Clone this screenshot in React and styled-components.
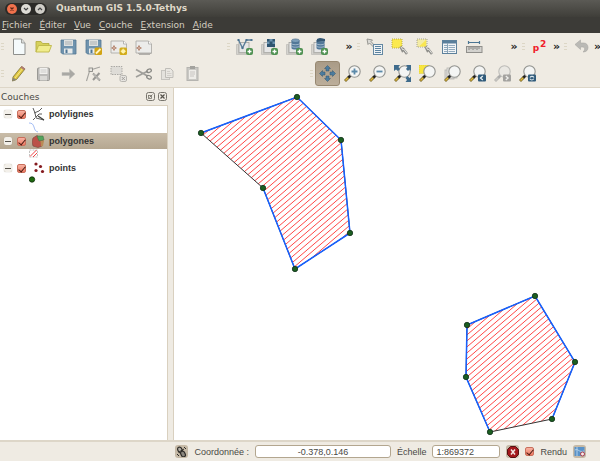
import React, { useState } from 'react'
import styled, { createGlobalStyle } from 'styled-components';

const INK = '#8a8a86';
const BLUE = '#3f6b8c';

const Badge = () => (
  <>
    <rect x="10" y="10" width="7" height="7" rx="2" fill="#4f9152" />
    <path d="M13.5 11.5v4M11.5 13.5h4" stroke="#fff" strokeWidth="1.3" />
  </>
)

const Sheets = () => (
  <>
    <path d="M.5 6.5h2v9h8v1H.5z" fill="#d4d3cf" stroke="#b5b4af" strokeWidth=".6" />
    <rect x="3" y="4.5" width="10" height="10" fill="#e6e6e6" stroke="#a3a3a0" strokeWidth=".8" />
  </>
)

const Lens = ({ faded }) => (
  <>
    <path d="M6.5 10.5L4 13" stroke={faded ? '#aaa' : '#222'} strokeWidth="2.6" />
    <path d="M4.5 12.5L1 16" stroke={faded ? '#b5b4b0' : '#77672a'} strokeWidth="2.8" />
    <path d="M4 13L1.5 15.5" stroke={faded ? '#c9c8c4' : '#e3b93a'} strokeWidth="1.4" />
    <circle cx="10.5" cy="6.5" r="5.7" fill={faded ? '#eae8e3' : '#f4f5f4'} stroke={faded ? '#bdbcb8' : '#92938f'} strokeWidth="1.1" />
  </>
)

const Wrench = () => (
  <>
    <path d="M9.5 8.5l2 4 1-1 3.5 4.5" fill="none" stroke="#8f8f8b" strokeWidth="2.6" />
    <path d="M10 9l2 3 .8-.8L16 15.5" fill="none" stroke="#e5e4e0" strokeWidth="1" />
  </>
)

const Database = () => (
  <>
    <path d="M5.5 3v7c0 2 8 2 8 0V3z" fill="#51789a" />
    <ellipse cx="9.5" cy="2.7" rx="4" ry="1.8" fill="#7b9db8" stroke="#3f6485" strokeWidth=".6" />
    <path d="M5.5 5.5c0 1.6 8 1.6 8 0M5.5 8c0 1.6 8 1.6 8 0" fill="none" stroke="#b4c8d6" strokeWidth=".8" />
  </>
)

const Disk = () => (
  <>
    <path d="M1 2h15v14H2.5L1 14.5z" fill="#6f93ae" stroke="#537792" strokeWidth=".8" />
    <rect x="4" y="2" width="9" height="6" fill="#dfe1e0" />
    <path d="M5 4h7M5 6h7" stroke="#9da5a9" strokeWidth=".8" />
    <rect x="4" y="10.5" width="8.5" height="5" fill="#e9ebea" />
    <rect x="5.5" y="11.5" width="2" height="3.5" fill="#4f7695" />
  </>
)

const MapPage = () => (
  <>
    <path d="M1 3h12.5L16.5 6v9H1z" fill="#ececea" stroke="#a7a6a2" strokeWidth=".8" />
    <path d="M13.5 3v3h3" fill="#fff" stroke="#a7a6a2" strokeWidth=".8" />
    <path d="M4 7.5v5M1.5 10h5" stroke="#a26448" strokeWidth="1.2" />
    <circle cx="4" cy="10" r="1.2" fill="#fff" stroke="#a26448" strokeWidth=".8" />
  </>
)

const ICONS = {
  newFile: <>
    <path d="M3.5 1h8L15 5v11.5H3.5z" fill="#f5fafb" stroke="#8f908d" />
    <path d="M11.5 1v4H15" fill="#dcdedc" stroke="#8f908d" strokeWidth=".8" />
  </>,
  open: <>
    <path d="M1 14V3.5h5l1.5 2H14V8" fill="#d6d05a" stroke="#b5af42" strokeWidth=".9" />
    <path d="M1 14L3.5 7.5h13L14 14z" fill="#f0ec8c" stroke="#bdb748" strokeWidth=".9" />
  </>,
  save: <Disk />,
  saveAs: <>
    <Disk />
    <rect x="9.5" y="9.5" width="7.5" height="7.5" rx="1.5" fill="#d2a414" />
    <path d="M11 15.5l4.5-4.5" stroke="#fff4c5" strokeWidth="1.8" />
  </>,
  newComposer: <>
    <MapPage />
    <rect x="9.5" y="9.5" width="7.5" height="7.5" rx="1.5" fill="#d2ac1c" />
    <circle cx="13.2" cy="13.2" r="2" fill="#fff6bd" />
    <path d="M13.2 10.5v5.4M10.5 13.2h5.4" stroke="#fff2a5" strokeWidth=".8" />
  </>,
  composers: <>
    <path d="M3 15.5h13.5M4 16.5h11" stroke="#aaa9a5" strokeWidth=".9" />
    <MapPage />
  </>,
  addVector: <>
    <Sheets />
    <path d="M2.5 2l4 8 4-8h5" fill="none" stroke="#5a7e99" strokeWidth="1.4" />
    <path d="M1.5 1h2v2h-2zM5.5 9h2v2h-2zM9.5 1h2v2h-2zM14.5 1h2v2h-2z" fill="#4b728f" />
    <Badge />
  </>,
  addRaster: <>
    <Sheets />
    <rect x="6" y="1" width="8" height="8" fill="#2f5570" />
    <path d="M8.5 1h3v2.5h-3zM6 3.5h2.5V6H6zM11.5 3.5H14V6h-2.5z" fill="#6c94b0" />
    <Badge />
  </>,
  addPostgis: <><Sheets /><Database /><Badge /></>,
  addSpatialite: <>
    <Sheets /><Database />
    <path d="M6 1l3-1 5 1v2l-8 1z" fill="#345773" />
    <Badge />
  </>,
  identify: <>
    <path d="M1 1l5.5 1-1.5 1.500L9 8 7.500 9 3.500 5 2 6.500z" fill="#dad9d5" stroke="#8f8e8a" strokeWidth=".9" />
    <rect x="7.5" y="6.5" width="9" height="10" fill="#f0f3f5" stroke="#6488a2" />
    <path d="M9 8.500h6M9 10.500h6M9 12.500h6M9 14.500h6" stroke="#5b83a1" />
  </>,
  select: <>
    <rect x="1" y="1" width="10" height="9" fill="#fbe94e" stroke="#b3a53c" strokeWidth=".9" strokeDasharray="1 1" />
    <Wrench />
  </>,
  deselect: <>
    <rect x="1" y="1" width="10" height="8" fill="#f3eba5" stroke="#9d9b8b" strokeWidth=".9" strokeDasharray="1 1" />
    <path d="M10 2v6.5H3z" fill="#f9e650" />
    <Wrench />
  </>,
  table: <>
    <rect x="1.5" y="2.5" width="14" height="13" fill="#f3f5f6" stroke="#5d819c" />
    <rect x="2" y="3" width="13" height="2.5" fill="#5a7f9b" />
    <path d="M3 7.5h3M3 9.5h3M3 11.5h3M3 13.5h3M7.5 7.5H14M7.5 9.5H14M7.5 11.5H14M7.5 13.5H14" stroke="#91aabd" />
    <path d="M6.500 5.500V15" stroke="#5d819c" strokeWidth=".7" />
  </>,
  measure: <>
    <path d="M2 4.5h12M2.5 3v3M13.5 3v3" stroke="#4c7693" strokeWidth="1.2" />
    <rect x=".5" y="8.5" width="15.5" height="6" fill="#d3d2ce" stroke="#908f8b" />
    <path d="M3 9v3M5 9v2M7 9v3M9 9v2M11 9v3M13 9v2" stroke="#73726f" strokeWidth=".8" />
  </>,
  undo: <path d="M2 6.5L7.5 2v3h3c3 0 4.5 2 4.5 4.5S13.5 14 10 14c2-1.5 2.5-5-.5-5h-2v2.5z" fill="#bab9b5" stroke="#a9a8a4" strokeWidth=".6" />,
  pencil: <>
    <path d="M3 12L11.5 1.5 15 4 6.5 14.5 2.5 16z" fill="#e0c640" stroke="#857a3d" strokeWidth=".9" />
    <path d="M5 13L13 3" stroke="#f5e98b" strokeWidth="1" />
    <path d="M10.5 2.5L11.8 1l3.5 2.7L14 5.3z" fill="#ae7a76" />
    <path d="M2.3 16.3L3 12.5l3.5 2.2z" fill="#8b867b" />
  </>,
  diskGrey: <>
    <rect x="2.5" y="3" width="12" height="12.5" rx="1" fill="#bcbbb9" stroke="#93928f" strokeWidth=".9" />
    <rect x="4.5" y="3" width="8" height="6" fill="#f1f0ee" />
    <path d="M5.5 5h6M5.5 7h6" stroke="#c3c2bf" strokeWidth=".8" />
    <rect x="5" y="11" width="7" height="4.5" fill="#dad9d6" />
  </>,
  arrow: <path d="M2 7.5h7.5V4L15 9l-5.500 5v-3.500H2z" fill="#a9a8a4" stroke="#bdbcb8" strokeWidth=".5" />,
  node: <>
    <path d="M1.5 16L5 4.5h2L15 2" fill="none" stroke="#a3a29e" strokeWidth="1.1" />
    <rect x="4" y="3" width="3.5" height="3.5" fill="#e7e5e0" stroke="#8b8a86" strokeWidth=".9" />
    <path d="M8 8.5l7 7M14.5 8L8 15" stroke="#999894" strokeWidth="2" />
    <path d="M8.5 9l6 6" stroke="#dad9d5" strokeWidth=".8" />
  </>,
  removeSel: <>
    <rect x="1" y="1.5" width="11" height="8" fill="#dedcd7" stroke="#aba9a4" strokeDasharray="1.5 1" />
    <rect x="10" y="10.5" width="6.5" height="6" rx="1.5" fill="#e7e5e1" stroke="#b8b6b1" />
    <path d="M11.800 12l3 3M14.800 12l-3 3" stroke="#a3a19d" />
  </>,
  cut: <>
    <path d="M1 4.5l11.500 6.500M1 12L13 6" stroke="#a09f9b" strokeWidth="1.8" />
    <ellipse cx="14" cy="12.2" rx="2.4" ry="1.6" transform="rotate(25 14 12.2)" fill="none" stroke={INK} strokeWidth="1.3" />
    <ellipse cx="14" cy="5.8" rx="2.4" ry="1.6" transform="rotate(-25 14 5.8)" fill="none" stroke={INK} strokeWidth="1.3" />
  </>,
  copy: <>
    <rect x="1.5" y="5.5" width="8" height="9" fill="#e4e2dd" stroke="#c6c4bf" />
    <path d="M5.5 3.5h5L13 6v6.5H5.5z" fill="#e9e7e2" stroke="#bfbdb8" />
    <path d="M7 6.5h3M7 8.5h4.5M7 10.5h4.5" stroke="#cbc9c4" strokeWidth=".8" />
  </>,
  paste: <>
    <rect x="2" y="2.5" width="11" height="13" fill="#c9c8c4" stroke="#b5b4b0" />
    <rect x="4" y="5" width="7" height="9" fill="#eeece8" />
    <rect x="5" y="1" width="5" height="3" fill="#a3a29e" />
    <path d="M5 7h5M5 9h5M5 11h4" stroke="#bdbbb7" strokeWidth=".8" />
  </>,
  pan: <g fill="#4c7c9e" stroke="#31556f" strokeWidth=".5">
    <path d="M8.5.5l3 3H10V6H7V3.500H5.500z" />
    <path d="M8.5 16.5l3-3H10V11H7v2.500H5.500z" />
    <path d="M.5 8.5l3-3V7H6v3H3.500v1.500z" />
    <path d="M16.5 8.5l-3-3V7H11v3h2.500v1.500z" />
  </g>,
  zoomIn: <><Lens /><path d="M10.5 3.500v6M7.500 6.500h6" stroke="#5b89a9" strokeWidth="1.8" /></>,
  zoomOut: <><Lens /><path d="M7.5 6.5h6" stroke="#5b89a9" strokeWidth="1.8" /></>,
  zoomFull: <>
    <Lens />
    <path d="M0 0h6L4.5 2 6 4 4 6 2 4.500 0 6zM17 0h-5l1.500 2L12 4l2 2 1.500-1.500L17 6zM17 17h-5.500l1.500-2-1.500-2 2-2 2 2 1.500-1.500z" fill={BLUE} />
  </>,
  zoomSelection: <>
    <rect x="0" y="0" width="10" height="8.5" fill="#f8e63e" stroke="#d4c341" strokeWidth=".8" strokeDasharray="1 1" />
    <Lens />
  </>,
  zoomLayer: <>
    <rect x="1" y="5" width="9" height="9" fill="#dcdbd7" stroke="#b6b5b1" strokeWidth=".8" />
    <rect x="3" y="3" width="10" height="10" fill="#e7e6e3" stroke="#b6b5b1" strokeWidth=".8" />
    <Lens />
  </>,
  zoomLast: <>
    <Lens />
    <rect x="9" y="9.5" width="8" height="7" rx="1" fill="#305b7b" />
    <path d="M13.8 11l-2.300 2 2.300 2" fill="none" stroke="#e9f1f5" strokeWidth="1.3" />
  </>,
  zoomNext: <>
    <Lens faded />
    <rect x="9" y="9.5" width="8" height="7" rx="1" fill="#a3a29f" />
    <path d="M11.8 11l2.300 2-2.300 2" fill="none" stroke="#efefec" strokeWidth="1.3" />
  </>,
  refresh: <>
    <Lens />
    <rect x="9" y="9.5" width="8" height="7" rx="1" fill="#305b7b" />
    <path d="M11 12.5c1-1.500 3-1.500 4 0M14.800 13.800c-1 1.500-3 1.500-4 0" fill="none" stroke="#dce8ef" strokeWidth="1.1" />
  </>,
  dockFloat: <>
    <rect x=".5" y=".5" width="8" height="8" rx="2" fill="none" stroke="#77746c" />
    <rect x="2.5" y="3.5" width="3" height="3" fill="none" stroke="#77746c" strokeWidth=".8" />
    <path d="M3.5 5.5l3-3" stroke="#77746c" strokeWidth=".9" />
  </>,
  dockClose: <>
    <rect x=".5" y=".5" width="8" height="8" rx="2" fill="none" stroke="#77746c" />
    <path d="M2.5 2.5l4 4M6.5 2.5l-4 4" stroke="#55524b" strokeWidth="1.2" />
  </>,
  lineLayer: <>
    <path d="M1 0l2 5 1 5 8 2M2 5l5-2 3-3M4 9l3-3h3M3 10l-2 2" fill="none" stroke="#5c5c5a" />
    <path d="M6 8l6 4" stroke="#3e3e3c" strokeWidth="1.2" />
  </>,
  polygonLayer: <>
    <path d="M1 3l4-2.5L8 3l3 2-1 6-4 1.500L1 11 0 7z" fill="#bb5148" stroke="#7e4c42" strokeWidth=".7" />
    <path d="M5 1h6l1 4-5 1z" fill="#52a45b" stroke="#4a7047" strokeWidth=".6" />
    <path d="M8.5 6l3.500-.5L11 11l-2 .5z" fill="#ba8b55" />
  </>,
  pointLayer: <g fill="#851a1f">
    <circle cx="4" cy="2" r="1.6" /><circle cx="8.5" cy="4.5" r="1.6" />
    <circle cx="4" cy="8.5" r="1.6" /><circle cx="10.500" cy="9.5" r="1.6" />
  </g>,
  lineSymbol: <path d="M0 1c3 0 4 1 5 4s1 4 4 5" fill="none" stroke="#a4bdf5" />,
  polygonSymbol: <>
    <path d="M.5 1h8v7h-8z" fill="#fff" stroke="#b5b3b0" strokeWidth=".8" strokeDasharray="2 1" />
    <path d="M1 7.5L7.5 1M4 8l4-4" stroke="#ee4444" />
  </>,
  pointSymbol: <circle cx="3" cy="3.500" r="2.7" fill="#1f6b10" stroke="#0d2b0a" strokeWidth=".8" />,
  toggleExtents: <>
    <rect x="2" y="1" width="4" height="6" rx="2" transform="rotate(-25 4 4)" fill="#b5b0a7" stroke="#2e2c29" strokeWidth="1.2" />
    <rect x="5" y="5" width="4" height="6" rx="2" transform="rotate(-25 7 8)" fill="#8b877f" stroke="#2e2c29" strokeWidth="1.2" />
    <path d="M8 1l2 2M1 8l2 2M3 6l5-3" stroke="#2e2c29" />
  </>,
  stop: <>
    <path d="M3.5.5h5l3 3v5l-3 3h-5l-3-3v-5z" fill="#a3191d" stroke="#571013" />
    <path d="M4 3.5l4 5M8 3.5l-4 5" stroke="#f3e7e5" strokeWidth="1.5" />
  </>,
  projection: <>
    <rect x=".5" y="1" width="10" height="9" fill="#5992c8" />
    <path d="M1 4c3-2 4 3 9 1M3 1v9" fill="none" stroke="#b9d7ef" strokeWidth=".9" />
    <circle cx="8.5" cy="8" r="2" fill="#f6eaea" stroke="#b0404c" />
  </>,
}

const Icon = ({ name, size = 17 }) => (
  <svg width={size} height={size} viewBox={`0 0 ${size} ${size}`} aria-hidden="true">{ICONS[name]}</svg>
)

const MENUS = ['Fichier', 'Éditer', 'Vue', 'Couche', 'Extension', 'Aide'];

const TOP_BARS = [
  { width: 226, tools: [['newFile', 'Nouveau projet'], ['open', 'Ouvrir'], ['save', 'Sauvegarder'], ['saveAs', 'Sauvegarder sous'], ['newComposer', 'Nouveau composeur'], ['composers', 'Composeurs']] },
  { width: 130, more: true, tools: [['addVector', 'Couche vecteur'], ['addRaster', 'Couche raster'], ['addPostgis', 'Couche PostGIS'], ['addSpatialite', 'Couche SpatiaLite']] },
  { width: 165, more: true, tools: [['identify', 'Identifier'], ['select', 'Sélectionner'], ['deselect', 'Désélectionner'], ['table', 'Table'], ['measure', 'Mesurer']] },
  { width: 42, more: true, tools: [['power', 'Puissance']] },
  { more: true, tools: [['undo', 'Annuler']] },
];

const BOTTOM_BARS = [
  { width: 309, tools: [['pencil', 'Mode édition'], ['diskGrey', 'Sauver'], ['arrow', 'Déplacer'], ['node', 'Noeuds'], ['removeSel', 'Supprimer'], ['cut', 'Couper'], ['copy', 'Copier'], ['paste', 'Coller']] },
  { tools: [['pan', 'Se déplacer'], ['zoomIn', 'Zoom avant'], ['zoomOut', 'Zoom arrière'], ['zoomFull', 'Zoom étendu'], ['zoomSelection', 'Zoom sélection'], ['zoomLayer', 'Zoom couche'], ['zoomLast', 'Zoom précédent'], ['zoomNext', 'Zoom suivant'], ['refresh', 'Rafraîchir']] },
];

const LAYERS = [
  { name: 'polylignes', icon: 'lineLayer', symbol: 'lineSymbol' },
  { name: 'polygones', icon: 'polygonLayer', symbol: 'polygonSymbol' },
  { name: 'points', icon: 'pointLayer', symbol: 'pointSymbol' },
];

// the first and last vertex of each shape are joined by a plain edge, the rest by the polyline
const SHAPES = [
  [[27, 45], [123, 9], [167, 52], [176, 145], [121, 181], [89, 100]],
  [[316, 344], [292, 289], [293, 237], [361, 208], [401, 274], [378, 331]],
];

function Tools({ bar, active, onPick }) {
  return (
    <ToolGroup $width={bar.width}>
      <Grip />
      {bar.tools.map(([id, label]) => (
        <ToolButton key={id} type="button" aria-label={label} $active={active === id} onClick={() => onPick(id)}>
          {id === 'power' ? <Power>p<sup>2</sup></Power> : <Icon name={id} />}
        </ToolButton>
      ))}
      {bar.more && <MoreButton type="button">»</MoreButton>}
    </ToolGroup>
  )
}

function MapCanvas() {
  return (
    <Canvas role="img" aria-label="Carte">
      <defs>
        <pattern id="hatch" width="7" height="6" patternUnits="userSpaceOnUse">
          <path d="M-7 12L14 -6M-7 6L7 -6M0 12L14 0" fill="none" stroke="#ff4646" strokeWidth="1" />
        </pattern>
      </defs>
      {SHAPES.map((shape, i) => (
        <g key={i}>
          <polygon points={shape.join(' ')} fill="url(#hatch)" stroke="#333" strokeWidth="1" />
          <polyline points={shape.join(' ')} fill="none" stroke="#1660ff" strokeWidth="1.5" />
          {shape.map(([x, y]) => (
            <circle key={x} cx={x} cy={y} r="2.7" fill="#1b5e20" stroke="#12301a" strokeWidth=".8" />
          ))}
        </g>
      ))}
    </Canvas>
  )
}

function App() {
  const [tool, setTool] = useState('pan');
  const [selected, setSelected] = useState('polygones');

  return (
    <Window>
      <GlobalStyle />
      <TitleBar>
        <WindowButtons>
          <WindowButton type="button" aria-label="Fermer" $color="#f0714c">
            <svg width="10" height="10" aria-hidden="true"><path d="M3.500 3.500l3 3M6.500 3.500l-3 3" stroke="#5d2315" strokeWidth="1.2" /></svg>
          </WindowButton>
          <WindowButton type="button" aria-label="Réduire" $color="#dedcd6">
            <svg width="10" height="10" aria-hidden="true"><path d="M3 4l2 2 2-2" fill="none" stroke="#444" strokeWidth="1.2" /></svg>
          </WindowButton>
          <WindowButton type="button" aria-label="Agrandir" $color="#cfcdc7">
            <svg width="10" height="10" aria-hidden="true"><path d="M3 6l2-2 2 2" fill="none" stroke="#444" strokeWidth="1.2" /></svg>
          </WindowButton>
        </WindowButtons>
        <Title>Quantum GIS 1.5.0-Tethys</Title>
      </TitleBar>
      <MenuBar>
        {MENUS.map((menu) => (
          <MenuItem key={menu} type="button"><u>{menu[0]}</u>{menu.slice(1)}</MenuItem>
        ))}
      </MenuBar>
      <Toolbars>
        <ToolRow>{TOP_BARS.map((bar, i) => <Tools key={i} bar={bar} active={tool} onPick={setTool} />)}</ToolRow>
        <ToolRow>{BOTTOM_BARS.map((bar, i) => <Tools key={i} bar={bar} active={tool} onPick={setTool} />)}</ToolRow>
      </Toolbars>
      <Main>
        <Dock>
          <DockHeader>
            <DockTitle>Couches</DockTitle>
            <DockButton type="button" aria-label="Détacher"><Icon name="dockFloat" size={9} /></DockButton>
            <DockButton type="button" aria-label="Fermer le panneau"><Icon name="dockClose" size={9} /></DockButton>
          </DockHeader>
          <Tree>
            {LAYERS.map((layer) => (
              <li key={layer.name}>
                <LayerRow $selected={selected === layer.name} onClick={() => setSelected(layer.name)}>
                  <Expander type="button" aria-label={`Replier ${layer.name}`} />
                  <CheckBox id={layer.name} type="checkbox" defaultChecked />
                  <Icon name={layer.icon} size={13} />
                  <LayerName htmlFor={layer.name}>{layer.name}</LayerName>
                </LayerRow>
                <Symbol><Icon name={layer.symbol} size={11} /></Symbol>
              </li>
            ))}
          </Tree>
        </Dock>
        <MapCanvas />
      </Main>
      <StatusBar>
        <StatusButton type="button" aria-label="Étendue"><Icon name="toggleExtents" size={11} /></StatusButton>
        <StatusLabel htmlFor="coord">Coordonnée :</StatusLabel>
        <StatusInput id="coord" $width={136} $align="center" defaultValue="-0.378,0.146" />
        <StatusLabel htmlFor="scale">Échelle</StatusLabel>
        <StatusInput id="scale" $width={68} defaultValue="1:869372" />
        <StatusButton type="button" aria-label="Arrêter"><Icon name="stop" size={12} /></StatusButton>
        <CheckBox id="render" type="checkbox" defaultChecked />
        <StatusLabel htmlFor="render">Rendu</StatusLabel>
        <StatusButton type="button" aria-label="Projection"><Icon name="projection" size={11} /></StatusButton>
      </StatusBar>
    </Window>
  )
}

export default App

const GlobalStyle = createGlobalStyle`
* { box-sizing: border-box; }
body {
  margin: 0;
  background: #efebe3;
}
button, input {
  margin: 0;
  padding: 0;
  border: none;
  background: none;
  font: inherit;
  color: inherit;
}
svg {
  display: block;
  flex: none;
}
`
const Window = styled.div`
display: flex;
flex-direction: column;
min-height: 100vh;
overflow: hidden;
font-family: "DejaVu Sans", sans-serif;
font-size: 9px;
color: #4a4945;
background: #efebe3;
`
const TitleBar = styled.header`
display: flex;
align-items: center;
gap: 9px;
height: 17px;
padding-left: 5px;
background: linear-gradient(#5b5a55, #3f3e39);
`
const WindowButtons = styled.div`
display: flex;
gap: 4px;
padding: 1px 2px;
border-radius: 7px;
background: #2b2a27;
`
const WindowButton = styled.button`
width: 10px;
height: 10px;
border-radius: 50%;
background: ${props => props.$color};
`
const Title = styled.h1`
margin: 0;
font-size: 9px;
font-weight: 700;
line-height: 17px;
color: #dfd8c8;
`
const MenuBar = styled.nav`
display: flex;
gap: 8px;
height: 16px;
padding-left: 2px;
background: #3c3b37;
`
const MenuItem = styled.button`
line-height: 16px;
color: #d5cfc1;
`
const Toolbars = styled.div`
border-bottom: 1px solid #ddd6c8;
`
const ToolRow = styled.div`
display: flex;
height: 27px;
`
const ToolGroup = styled.div`
display: flex;
align-items: center;
flex: ${props => props.$width ? `0 0 ${props.$width}px` : '1 1 0'};
min-width: 0;
`
const Grip = styled.span`
flex: none;
width: 3px;
height: 8px;
margin: 0 2px 0 1px;
background: repeating-linear-gradient(#ddd7c6 0 1px, transparent 1px 3px);
`
const ToolButton = styled.button`
display: flex;
align-items: center;
justify-content: center;
flex: none;
width: 25px;
height: 25px;
border-radius: 3px;
${props => props.$active && `
  border: 1px solid #978871;
  background: linear-gradient(#a99b87, #bcae9a);
`}
`
const Power = styled.span`
font-size: 9px;
font-weight: 700;
line-height: 12px;
color: #f0202a;
sup {
  margin-left: 1px;
  font-size: 9px;
  line-height: 8px;
}
`
const MoreButton = styled.button`
width: 10px;
margin: 0 2px 0 auto;
font-size: 11px;
font-weight: 700;
line-height: 16px;
color: #222;
`
const Main = styled.main`
display: flex;
flex: 1;
`
const Dock = styled.aside`
display: flex;
flex-direction: column;
flex: none;
width: 168px;
margin-right: 5px;
`
const DockHeader = styled.div`
display: flex;
align-items: center;
gap: 3px;
height: 17px;
padding: 0 1px;
`
const DockTitle = styled.h2`
flex: 1;
margin: 0;
font-size: 9px;
font-weight: 400;
`
const DockButton = styled.button`
width: 9px;
height: 9px;
`
const Tree = styled.ul`
flex: 1;
margin: 0;
padding: 0;
list-style: none;
background: #fff;
border-top: 1px solid #d9d0bf;
border-right: 1px solid #d9d0bf;
`
const LayerRow = styled.div`
display: flex;
align-items: center;
height: 16px;
padding-left: 4px;
background: ${props => props.$selected ? 'linear-gradient(#c9bca8, #b5a791)' : 'none'};
`
const Expander = styled.button`
display: flex;
align-items: center;
justify-content: center;
width: 8px;
height: 8px;
margin-right: 5px;
border-radius: 2px;
background: #f3f0ea;
box-shadow: 0 0 1px #a59b8a;
&::before {
  content: "";
  width: 6px;
  height: 1px;
  background: #55524b;
}
`
const CheckBox = styled.input`
appearance: none;
flex: none;
width: 9px;
height: 9px;
border: 1px solid #c96f5c;
border-radius: 2px;
background: #fbe9e4;
&:checked {
  background: linear-gradient(#f7b3a3, #f07a62);
}
&:checked::before {
  content: "";
  display: block;
  width: 3px;
  height: 6px;
  margin-left: 2px;
  border: solid #4b1d15;
  border-width: 0 1px 1px 0;
  transform: rotate(40deg);
}
& + svg {
  margin: 0 4px 0 6px;
}
`
const LayerName = styled.label`
font-family: "Liberation Sans", Arial, sans-serif;
font-weight: 700;
line-height: 16px;
color: #333;
`
const Symbol = styled.div`
height: 11px;
padding-left: 29px;
`
const Canvas = styled.svg`
flex: 1;
min-width: 0;
align-self: stretch;
min-height: 350px;
background: #fff;
border-left: 1px solid #d9d0bf;
`
const StatusBar = styled.footer`
display: flex;
align-items: center;
justify-content: flex-end;
gap: 6px;
height: 21px;
padding-right: 14px;
border-top: 2px solid #ddd6c8;
font-family: "Liberation Sans", Arial, sans-serif;
`
const StatusLabel = styled.label`
white-space: nowrap;
`
const StatusInput = styled.input`
width: ${props => props.$width}px;
height: 13px;
padding: 0 3px;
border: 1px solid #b3a68f;
border-radius: 3px;
background: #fff;
text-align: ${props => props.$align || 'left'};
`
const StatusButton = styled.button`
display: flex;
align-items: center;
justify-content: center;
width: 13px;
height: 13px;
border-radius: 3px;
background: #c5b9a6;
`
